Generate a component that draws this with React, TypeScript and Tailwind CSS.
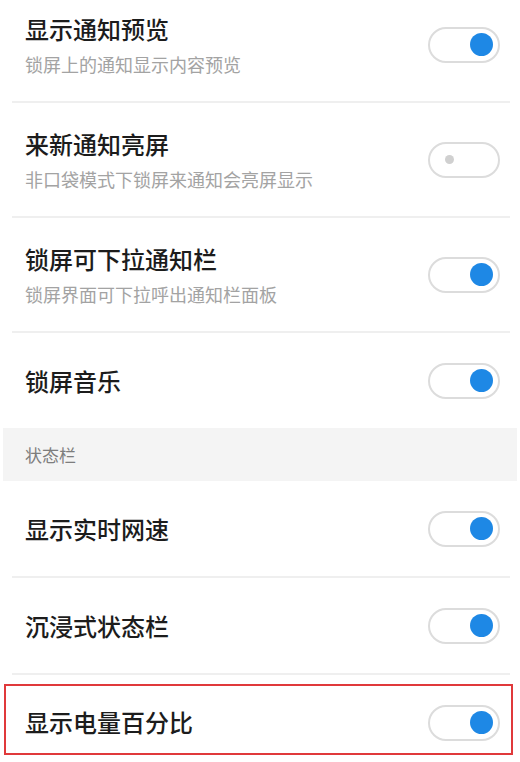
import React from "react";

type Item = { title: string; desc?: string; on: boolean };

const lockItems: Item[] = [
  { title: "显示通知预览", desc: "锁屏上的通知显示内容预览", on: true },
  { title: "来新通知亮屏", desc: "非口袋模式下锁屏来通知会亮屏显示", on: false },
  { title: "锁屏可下拉通知栏", desc: "锁屏界面可下拉呼出通知栏面板", on: true },
  { title: "锁屏音乐", on: true },
];

const font = { fontFamily: '"Noto Sans CJK SC", "Noto Sans", sans-serif' };

function Toggle({ on }: { on: boolean }) {
  return (
    <div className="w-[72px] h-[36px] rounded-full border-2 border-[#dcdcdc] bg-white flex items-center shrink-0">
      {on ? (
        <div className="ml-auto mr-[5px] w-[23px] h-[23px] rounded-full bg-[#1e88e5]" />
      ) : (
        <div className="ml-[15px] w-[9px] h-[9px] rounded-full bg-[#d0d0d0]" />
      )}
    </div>
  );
}

function Divider() {
  return <div className="h-[2px] ml-[12px] mr-[10px] bg-[#efefef]" />;
}

function Row({ item }: { item: Item }) {
  return (
    <div
      className={`flex items-center justify-between pl-[25px] pr-[20px] ${
        item.desc ? "h-[113px]" : "h-[95px]"
      }`}
    >
      <div className="flex flex-col">
        <span className="text-[24px] leading-[30px] font-medium text-[#1c1c1c]">{item.title}</span>
        {item.desc && (
          <span className="mt-[8px] text-[18px] leading-[24px] text-[#a3a3a3]">{item.desc}</span>
        )}
      </div>
      <Toggle on={item.on} />
    </div>
  );
}

export default function App() {
  return (
    <div className="w-[520px] h-[762px] overflow-hidden bg-white" style={font}>
      <div className="-mt-[12px]">
        {lockItems.map((item, i) => (
          <div key={item.title}>
            <Row item={item} />
            {i < lockItems.length - 1 && <Divider />}
          </div>
        ))}

        <div className="h-[53px] mx-[3px] bg-[#f4f4f4] flex items-center pl-[22px]">
          <span className="text-[17px] text-[#7d7d7d]">状态栏</span>
        </div>

        <Row item={{ title: "显示实时网速", on: true }} />
        <Divider />
        <Row item={{ title: "沉浸式状态栏", on: true }} />
        <Divider />

        <div className="pt-[9px] pl-[4px] pr-[7px]">
          <div className="h-[71px] border-2 border-[#e0393b] flex items-center justify-between pl-[19px] pr-[11px]">
            <span className="text-[24px] leading-[30px] font-medium text-[#1c1c1c] mt-[4px]">显示电量百分比</span>
            <div className="mt-[6px]">
              <Toggle on={true} />
            </div>
          </div>
        </div>
      </div>
    </div>
  );
}
